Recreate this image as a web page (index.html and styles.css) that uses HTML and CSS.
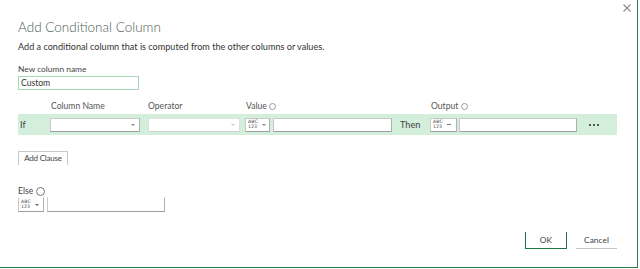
FILE: index.html
```html
<!DOCTYPE html>
<html>
<head>
<meta charset="utf-8">
<link rel="stylesheet" href="styles.css">
</head>
<body>
<div class="dialog">
  <div class="close"><svg width="8" height="8" viewBox="0 0 8 8"><path d="M0.5 0.5 L7.5 7.5 M7.5 0.5 L0.5 7.5" stroke="#8a8a8a" stroke-width="1.1" fill="none"/></svg></div>
  <h1 class="title">Add Conditional Column</h1>
  <p class="subtitle">Add a conditional column that is computed from the other columns or values.</p>
  <div class="field-label">New column name</div>
  <div class="name-input">Custom</div>

  <div class="grid headers">
    <div class="h-col">Column Name</div>
    <div class="h-op">Operator</div>
    <div class="h-val">Value <span class="info-s"></span></div>
    <div class="h-out">Output <span class="info-s"></span></div>
  </div>
  <div class="grid band">
    <div class="if">If</div>
    <div class="select c-col"><span class="caret"></span></div>
    <div class="select c-op disabled"><span class="caret"></span></div>
    <div class="type c-vtype"><span class="abc"><span>ABC</span><span>123</span></span><span class="caret"></span></div>
    <div class="input c-val"></div>
    <div class="then">Then</div>
    <div class="type c-otype"><span class="abc"><span>ABC</span><span>123</span></span><span class="dash"></span></div>
    <div class="input c-out"></div>
    <div class="more"><span></span><span></span><span></span></div>
  </div>

  <div class="add-clause">Add Clause</div>

  <div class="else-label">Else <span class="info-l"></span></div>
  <div class="else-row">
    <div class="type e-type"><span class="abc"><span>ABC</span><span>123</span></span><span class="caret dark"></span></div>
    <div class="input e-val"></div>
  </div>

  <div class="footer">
    <div class="btn ok">OK</div>
    <div class="btn cancel">Cancel</div>
  </div>
</div>
</body>
</html>
```
FILE: styles.css
```css
html, body {
  margin: 0;
  padding: 0;
  background: #ffffff;
}
body {
  width: 640px;
  height: 269px;
  overflow: hidden;
  font-family: Lato, "Open Sans", sans-serif;
  color: #3a3a3a;
}
.dialog {
  position: relative;
  box-sizing: border-box;
  width: 638px;
  height: 268px;
  padding: 0 0 0 18px;
  border-right: 1px solid #2b7a4b;
  border-bottom: 1px solid #2b7a4b;
}
.close {
  position: absolute;
  top: 4px;
  right: 6px;
  width: 8px;
  height: 8px;
  line-height: 0;
}
.title {
  margin: 0;
  padding-top: 18px;
  font-weight: 300;
  font-size: 13.5px;
  line-height: 18px;
  color: #4d5a58;
}
.subtitle {
  margin: 5px 0 0 0;
  font-size: 9.1px;
  line-height: 12px;
  color: #333;
}
.field-label {
  margin-top: 11px;
  font-size: 8.4px;
  line-height: 10px;
  color: #444;
}
.name-input {
  margin-top: 2px;
  width: 117px;
  height: 12px;
  border: 1px solid #a6d6b8;
  font-size: 8.6px;
  line-height: 12px;
  padding-left: 2px;
  color: #333;
}
.grid {
  display: grid;
  grid-template-columns: 32px 90px 8px 92px 5px 25px 3px 119px 38px 27px 2px 118px 40px;
  width: 599px;
}
.headers {
  margin-top: 11px;
  height: 13px;
  font-size: 8.6px;
  line-height: 11px;
  color: #555;
}
.h-col { grid-column: 2; padding-left: 1px; }
.h-op { grid-column: 4; }
.h-val { grid-column: 6 / 9; padding-left: 1px; }
.h-out { grid-column: 10 / 13; padding-left: 1px; }
.info-s {
  display: inline-block;
  width: 5px;
  height: 5px;
  border: 1px solid #999;
  border-radius: 50%;
  vertical-align: -1px;
}
.band {
  background: #d4eedc;
  height: 21px;
  align-items: center;
}
.if {
  grid-column: 1;
  font-size: 9.2px;
  padding-left: 2px;
  color: #444;
}
.select, .input, .type {
  height: 14px;
  box-sizing: border-box;
  background: #fff;
  border: 1px solid #c9c9c9;
  border-bottom-color: #9e9e9e;
  border-right-color: #b0b0b0;
  position: relative;
}
.c-col { grid-column: 2; }
.c-op { grid-column: 4; border-color: #e0e0e0; border-bottom-color: #d0d0d0; }
.c-vtype { grid-column: 6; }
.c-val { grid-column: 8; }
.c-otype { grid-column: 10; }
.c-out { grid-column: 12; }
.select .caret {
  position: absolute;
  right: 4px;
  top: 5px;
}
.caret {
  display: inline-block;
  width: 0;
  height: 0;
  border-left: 2px solid transparent;
  border-right: 2px solid transparent;
  border-top: 2px solid #888;
}
.caret.dark { border-top-color: #666; }
.disabled .caret { border-top-color: #c8c8c8; }
.type {
  display: flex;
  align-items: center;
  padding-left: 2px;
  gap: 4px;
}
.abc {
  display: flex;
  flex-direction: column;
  font-size: 4.6px;
  line-height: 4.6px;
  color: #444;
  letter-spacing: 0.1px;
  font-family: "DejaVu Sans", sans-serif;
}
.dash {
  display: inline-block;
  width: 4px;
  height: 1px;
  background: #777;
}
.then {
  grid-column: 9;
  padding-left: 8px;
  font-size: 9.2px;
  color: #444;
}
.more {
  grid-column: 13;
  padding-left: 12px;
  display: flex;
  gap: 2px;
}
.more span {
  width: 2px;
  height: 2px;
  background: #555;
}
.add-clause {
  margin-top: 16px;
  width: 50px;
  height: 14px;
  box-sizing: border-box;
  border: 1px solid #c8c8c8;
  border-bottom: none;
  font-size: 8px;
  letter-spacing: -0.2px;
  line-height: 13px;
  text-align: center;
  color: #444;
}
.else-label {
  margin-top: 21px;
  font-size: 8.6px;
  line-height: 10px;
  color: #444;
  display: flex;
  align-items: center;
  gap: 3px;
}
.info-l {
  display: inline-block;
  width: 7px;
  height: 7px;
  border: 1px solid #777;
  border-radius: 50%;
}
.else-row {
  margin-top: 1px;
  display: flex;
  gap: 3px;
}
.e-type {
  width: 26px;
  height: 15px;
  border-top-color: #fff;
}
.e-val {
  width: 118px;
  height: 15px;
  border-top-color: #fff;
}
.footer {
  margin-top: 20px;
  display: flex;
  justify-content: flex-end;
  gap: 9px;
  width: 599px;
}
.btn {
  width: 42px;
  height: 17px;
  box-sizing: border-box;
  font-size: 8.4px;
  line-height: 16px;
  text-align: center;
  color: #444;
}
.ok {
  border: 1px solid #217346;
  border-top: none;
}
.cancel {
  width: 41px;
  border-bottom: 1px solid #c4c4c4;
}
```
